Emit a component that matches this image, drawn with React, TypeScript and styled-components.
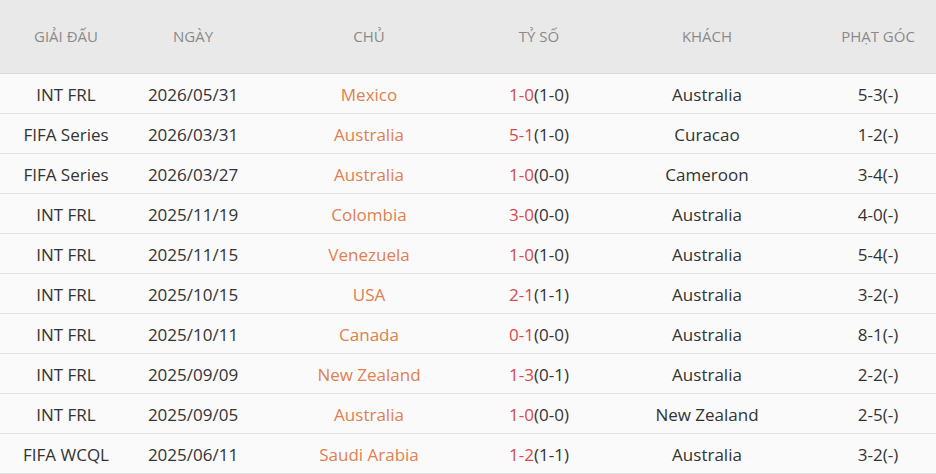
import styled, { createGlobalStyle } from 'styled-components'

const GlobalStyle = createGlobalStyle`
    html, body {
        margin: 0;
        padding: 0;
        background: #ffffff;
    }
    body {
        font-family: "Open Sans", "Noto Sans", "Liberation Sans", sans-serif;
    }
`

type Match = {
    league: string
    date: string
    home: string
    score: string
    half: string
    away: string
    corner: string
}

const matches: Match[] = [
    { league: 'INT FRL', date: '2026/05/31', home: 'Mexico', score: '1-0', half: '(1-0)', away: 'Australia', corner: '5-3(-)' },
    { league: 'FIFA Series', date: '2026/03/31', home: 'Australia', score: '5-1', half: '(1-0)', away: 'Curacao', corner: '1-2(-)' },
    { league: 'FIFA Series', date: '2026/03/27', home: 'Australia', score: '1-0', half: '(0-0)', away: 'Cameroon', corner: '3-4(-)' },
    { league: 'INT FRL', date: '2025/11/19', home: 'Colombia', score: '3-0', half: '(0-0)', away: 'Australia', corner: '4-0(-)' },
    { league: 'INT FRL', date: '2025/11/15', home: 'Venezuela', score: '1-0', half: '(1-0)', away: 'Australia', corner: '5-4(-)' },
    { league: 'INT FRL', date: '2025/10/15', home: 'USA', score: '2-1', half: '(1-1)', away: 'Australia', corner: '3-2(-)' },
    { league: 'INT FRL', date: '2025/10/11', home: 'Canada', score: '0-1', half: '(0-0)', away: 'Australia', corner: '8-1(-)' },
    { league: 'INT FRL', date: '2025/09/09', home: 'New Zealand', score: '1-3', half: '(0-1)', away: 'Australia', corner: '2-2(-)' },
    { league: 'INT FRL', date: '2025/09/05', home: 'Australia', score: '1-0', half: '(0-0)', away: 'New Zealand', corner: '2-5(-)' },
    { league: 'FIFA WCQL', date: '2025/06/11', home: 'Saudi Arabia', score: '1-2', half: '(1-1)', away: 'Australia', corner: '3-2(-)' },
]

const headers = ['GIẢI ĐẤU', 'NGÀY', 'CHỦ', 'TỶ SỐ', 'KHÁCH', 'PHẠT GÓC']

export default function App() {
    return (
        <>
            <GlobalStyle />
            <Table>
                <HeaderRow>
                    {headers.map((h) => (
                        <HeadCell key={h}>{h}</HeadCell>
                    ))}
                </HeaderRow>
                {matches.map((m, i) => (
                    <Row key={i}>
                        <Cell>{m.league}</Cell>
                        <Cell>{m.date}</Cell>
                        <Cell $home>{m.home}</Cell>
                        <Cell>
                            <Score>{m.score}</Score>
                            {m.half}
                        </Cell>
                        <Cell>{m.away}</Cell>
                        <Cell>{m.corner}</Cell>
                    </Row>
                ))}
            </Table>
        </>
    )
}

// column widths shared by header and body rows
const columns = '132px 122px 230px 110px 226px 116px'

const Table = styled.div`
    width: 936px;
    display: flex;
    flex-direction: column;
`

const HeaderRow = styled.div`
    display: grid;
    grid-template-columns: ${columns};
    height: 73px;
    background-color: #e9e9e9;
    border-bottom: 1px solid #dcdcdc;
`

const HeadCell = styled.div`
    display: flex;
    align-items: center;
    justify-content: center;
    padding-bottom: 2px;
    color: #8a8a8a;
    font-size: 15px;
    white-space: nowrap;
`

const Row = styled.div`
    display: grid;
    grid-template-columns: ${columns};
    height: 39px;
    background-color: #fafafa;
    border-bottom: 1px solid #e4e4e4;
`

const Cell = styled.div<{ $home?: boolean }>`
    display: flex;
    align-items: center;
    justify-content: center;
    padding-top: 2px;
    font-size: 17px;
    color: ${({ $home }) => ($home ? '#e0804f' : '#333333')};
    white-space: nowrap;
`

const Score = styled.span`
    color: #d9484a;
`
